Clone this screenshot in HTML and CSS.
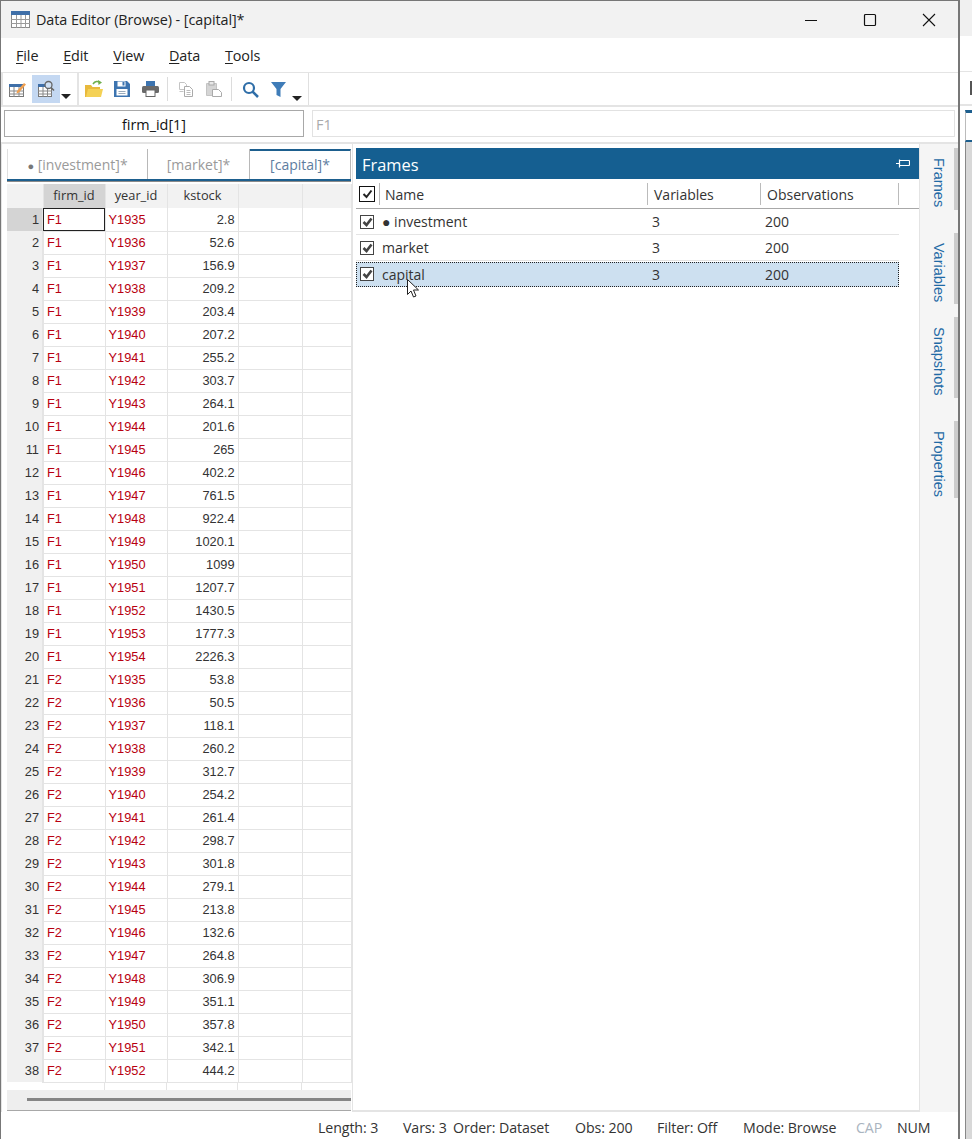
FILE: index.html
```html
<!DOCTYPE html>
<html lang="en">
<head>
    <meta charset="UTF-8">
    <title>Data Editor (Browse) - [capital]*</title>
    <link rel="stylesheet" href="styles.css">
</head>
<body>
<div class="screen">
    <div class="window">
        <header class="titlebar">
            <svg class="app-icon" width="20" height="18" viewBox="0 0 20 18">
                <rect x="0.5" y="0.5" width="18" height="16" fill="#fff" stroke="#8a8a8a"/>
                <rect x="0" y="0" width="19" height="4" fill="#3f6fa8"/>
                <path d="M0 8.500h19M0 12.500h19M5.500 4v13M10 4v13M14.500 4v13" stroke="#9a9a9a" fill="none"/>
            </svg>
            <span class="title">Data Editor (Browse) - [capital]*</span>
            <div class="win-buttons">
                <svg width="14" height="14" viewBox="0 0 14 14"><path d="M1 7.500h12" stroke="#111" fill="none"/></svg>
                <svg width="14" height="14" viewBox="0 0 14 14"><rect x="1.500" y="1.500" width="11" height="11" rx="1" fill="none" stroke="#111" stroke-width="1.200"/></svg>
                <svg width="14" height="14" viewBox="0 0 14 14"><path d="M1 1l12 12M13 1L1 13" stroke="#111" stroke-width="1.100" fill="none"/></svg>
            </div>
        </header>

        <nav class="menubar">
            <span><u>F</u>ile</span>
            <span><u>E</u>dit</span>
            <span><u>V</u>iew</span>
            <span><u>D</u>ata</span>
            <span><u>T</u>ools</span>
        </nav>

        <div class="toolbar-row">
            <div class="toolbar">
                <div class="tool-group first">
                    <span class="tool">
                        <svg width="18" height="18" viewBox="0 0 18 18">
                            <rect x="1.500" y="4.500" width="14" height="12" fill="#fff" stroke="#777"/>
                            <rect x="1" y="4" width="15" height="3" fill="#3f6fa8"/>
                            <path d="M1 11h15M1 14h15M6 7v10M11 7v10" stroke="#888" fill="none"/>
                            <path d="M9 11l7-8 2 1.500-7 8-2.500 1z" fill="#f0a050"/>
                        </svg>
                    </span>
                    <span class="tool active">
                        <svg width="18" height="18" viewBox="0 0 18 18">
                            <rect x="1.500" y="4.500" width="13" height="12" fill="#fff" stroke="#777"/>
                            <rect x="1" y="4" width="14" height="3" fill="#3f6fa8"/>
                            <path d="M1 11h14M1 14h14M6 7v10M10.500 7v10" stroke="#888" fill="none"/>
                            <circle cx="11.500" cy="5" r="3.500" fill="#cfe0f5" stroke="#666" stroke-width="1.300"/>
                            <path d="M14 7.500l3 3" stroke="#666" stroke-width="1.600"/>
                        </svg>
                    </span>
                    <span class="caret"></span>
                </div>
                <div class="tool-group second">
                    <span class="tool">
                        <svg width="18" height="18" viewBox="0 0 18 18">
                            <path d="M0 5h6l1.500 2H15v10H0z" fill="#e8b93c"/>
                            <path d="M1 17l2-8h15l-2 8z" fill="#f4d155"/>
                            <path d="M8 4c2-3 5-3 7-1.500" stroke="#6fae4c" stroke-width="1.500" fill="none"/>
                            <path d="M13 0l4 2.500-3.500 2.500z" fill="#6fae4c"/>
                        </svg>
                    </span>
                    <span class="tool">
                        <svg width="16" height="16" viewBox="0 0 16 16">
                            <path d="M0 0h13l3 3v13H0z" fill="#3d74b0"/>
                            <rect x="3.500" y="0.500" width="8" height="5" fill="#fff"/>
                            <rect x="8.500" y="1" width="2" height="3.500" fill="#3d74b0"/>
                            <rect x="2.500" y="8" width="11" height="6.500" fill="#fff"/>
                            <path d="M4.500 10.500h7M4.500 12.500h7" stroke="#9ab" fill="none"/>
                        </svg>
                    </span>
                    <span class="tool">
                        <svg width="17" height="16" viewBox="0 0 17 16">
                            <rect x="4" y="0" width="9" height="5" fill="#3d74b0"/>
                            <rect x="0" y="5" width="17" height="7" rx="1.500" fill="#6a6a6a"/>
                            <rect x="4" y="9" width="9" height="6.500" fill="#fff" stroke="#666"/>
                        </svg>
                    </span>
                    <i class="tool-sep"></i>
                    <span class="tool">
                        <svg width="16" height="16" viewBox="0 0 16 16">
                            <path d="M1.500 1.500h5l2 2v5h-7zM1.500 10.500h4" fill="#fff" stroke="#c4c4c4"/>
                            <path d="M6.500 5.500h5l3 3v7h-8z" fill="#fff" stroke="#aaa"/>
                            <path d="M8.500 9.500h4M8.500 11.500h4M8.500 13.500h4" stroke="#bbb" fill="none"/>
                        </svg>
                    </span>
                    <span class="tool">
                        <svg width="16" height="16" viewBox="0 0 16 16">
                            <path d="M0.500 2.500h10v12h-10z" fill="#d5d5d5" stroke="#c4c4c4"/>
                            <rect x="3" y="0.500" width="5" height="3.500" fill="#e8e8e8" stroke="#aaa"/>
                            <path d="M6.500 8.500h6l3 3v4h-9z" fill="#fff" stroke="#aaa"/>
                        </svg>
                    </span>
                    <i class="tool-sep"></i>
                    <span class="tool">
                        <svg width="17" height="17" viewBox="0 0 17 17">
                            <circle cx="7" cy="7" r="5" fill="none" stroke="#2f6ea8" stroke-width="2.200"/>
                            <path d="M10.500 10.500l5.500 5.500" stroke="#2f6ea8" stroke-width="2.500"/>
                        </svg>
                    </span>
                    <span class="tool">
                        <svg width="15" height="17" viewBox="0 0 15 17">
                            <path d="M0 1h15L9.500 8v8l-4-2V8z" fill="#3f7cb8"/>
                        </svg>
                    </span>
                    <span class="caret low"></span>
                </div>
            </div>
        </div>

        <div class="input-row">
            <div class="name-box">firm_id[1]</div>
            <div class="value-box">F1</div>
        </div>

        <div class="main">
            <section class="data-pane">
                <div class="tabs">
                    <span class="tab"><b class="dot">●</b> [investment]*</span>
                    <span class="tab tab-market">[market]*</span>
                    <span class="tab tab-current">[capital]*</span>
                </div>
                <div class="grid-wrap">
                    <table class="grid">
                        <colgroup>
                            <col class="c-row"><col class="c-firm"><col class="c-year"><col class="c-stock"><col class="c-blank"><col class="c-blank2">
                        </colgroup>
                        <thead>
                            <tr><th class="corner"></th><th class="selected-col">firm_id</th><th>year_id</th><th>kstock</th><th></th><th></th></tr>
                        </thead>
                        <tbody>
                            <tr><th class="selected-row">1</th><td class="str cursor-cell">F1</td><td class="str">Y1935</td><td>2.8</td><td></td><td></td></tr>
                            <tr><th>2</th><td class="str">F1</td><td class="str">Y1936</td><td>52.6</td><td></td><td></td></tr>
                            <tr><th>3</th><td class="str">F1</td><td class="str">Y1937</td><td>156.9</td><td></td><td></td></tr>
                            <tr><th>4</th><td class="str">F1</td><td class="str">Y1938</td><td>209.2</td><td></td><td></td></tr>
                            <tr><th>5</th><td class="str">F1</td><td class="str">Y1939</td><td>203.4</td><td></td><td></td></tr>
                            <tr><th>6</th><td class="str">F1</td><td class="str">Y1940</td><td>207.2</td><td></td><td></td></tr>
                            <tr><th>7</th><td class="str">F1</td><td class="str">Y1941</td><td>255.2</td><td></td><td></td></tr>
                            <tr><th>8</th><td class="str">F1</td><td class="str">Y1942</td><td>303.7</td><td></td><td></td></tr>
                            <tr><th>9</th><td class="str">F1</td><td class="str">Y1943</td><td>264.1</td><td></td><td></td></tr>
                            <tr><th>10</th><td class="str">F1</td><td class="str">Y1944</td><td>201.6</td><td></td><td></td></tr>
                            <tr><th>11</th><td class="str">F1</td><td class="str">Y1945</td><td>265</td><td></td><td></td></tr>
                            <tr><th>12</th><td class="str">F1</td><td class="str">Y1946</td><td>402.2</td><td></td><td></td></tr>
                            <tr><th>13</th><td class="str">F1</td><td class="str">Y1947</td><td>761.5</td><td></td><td></td></tr>
                            <tr><th>14</th><td class="str">F1</td><td class="str">Y1948</td><td>922.4</td><td></td><td></td></tr>
                            <tr><th>15</th><td class="str">F1</td><td class="str">Y1949</td><td>1020.1</td><td></td><td></td></tr>
                            <tr><th>16</th><td class="str">F1</td><td class="str">Y1950</td><td>1099</td><td></td><td></td></tr>
                            <tr><th>17</th><td class="str">F1</td><td class="str">Y1951</td><td>1207.7</td><td></td><td></td></tr>
                            <tr><th>18</th><td class="str">F1</td><td class="str">Y1952</td><td>1430.5</td><td></td><td></td></tr>
                            <tr><th>19</th><td class="str">F1</td><td class="str">Y1953</td><td>1777.3</td><td></td><td></td></tr>
                            <tr><th>20</th><td class="str">F1</td><td class="str">Y1954</td><td>2226.3</td><td></td><td></td></tr>
                            <tr><th>21</th><td class="str">F2</td><td class="str">Y1935</td><td>53.8</td><td></td><td></td></tr>
                            <tr><th>22</th><td class="str">F2</td><td class="str">Y1936</td><td>50.5</td><td></td><td></td></tr>
                            <tr><th>23</th><td class="str">F2</td><td class="str">Y1937</td><td>118.1</td><td></td><td></td></tr>
                            <tr><th>24</th><td class="str">F2</td><td class="str">Y1938</td><td>260.2</td><td></td><td></td></tr>
                            <tr><th>25</th><td class="str">F2</td><td class="str">Y1939</td><td>312.7</td><td></td><td></td></tr>
                            <tr><th>26</th><td class="str">F2</td><td class="str">Y1940</td><td>254.2</td><td></td><td></td></tr>
                            <tr><th>27</th><td class="str">F2</td><td class="str">Y1941</td><td>261.4</td><td></td><td></td></tr>
                            <tr><th>28</th><td class="str">F2</td><td class="str">Y1942</td><td>298.7</td><td></td><td></td></tr>
                            <tr><th>29</th><td class="str">F2</td><td class="str">Y1943</td><td>301.8</td><td></td><td></td></tr>
                            <tr><th>30</th><td class="str">F2</td><td class="str">Y1944</td><td>279.1</td><td></td><td></td></tr>
                            <tr><th>31</th><td class="str">F2</td><td class="str">Y1945</td><td>213.8</td><td></td><td></td></tr>
                            <tr><th>32</th><td class="str">F2</td><td class="str">Y1946</td><td>132.6</td><td></td><td></td></tr>
                            <tr><th>33</th><td class="str">F2</td><td class="str">Y1947</td><td>264.8</td><td></td><td></td></tr>
                            <tr><th>34</th><td class="str">F2</td><td class="str">Y1948</td><td>306.9</td><td></td><td></td></tr>
                            <tr><th>35</th><td class="str">F2</td><td class="str">Y1949</td><td>351.1</td><td></td><td></td></tr>
                            <tr><th>36</th><td class="str">F2</td><td class="str">Y1950</td><td>357.8</td><td></td><td></td></tr>
                            <tr><th>37</th><td class="str">F2</td><td class="str">Y1951</td><td>342.1</td><td></td><td></td></tr>
                            <tr><th>38</th><td class="str">F2</td><td class="str">Y1952</td><td>444.2</td><td></td><td></td></tr>
                        </tbody>
                    </table>
                    <div class="grid-tail"><i></i><i></i><i></i><i></i><i></i></div>
                    <div class="hscroll"><span class="hscroll-thumb"></span></div>
                </div>
            </section>

            <section class="frames-pane">
                <div class="frames-title">
                    <span class="frames-label">Frames</span>
                    <svg width="14" height="9" viewBox="0 0 14 9">
                        <path d="M0 4.500h3.500M3.500 0.500v8M3.500 1.500h10M3.500 6.500h10M13.500 1.500v5" stroke="#fff" fill="none" stroke-width="1.200"/>
                    </svg>
                </div>
                <div class="frames-head">
                    <span class="cell-check head-check"><span class="checkbox strong"><svg width="11" height="10" viewBox="0 0 11 10"><path d="M1.500 5l3 3 5-6.500" stroke="#222" stroke-width="2" fill="none"/></svg></span></span>
                    <span class="cell-name">Name</span>
                    <span class="cell-vars">Variables</span>
                    <span class="cell-obs">Observations</span>
                </div>
                <div class="frames-row">
                    <span class="checkbox"><svg width="11" height="10" viewBox="0 0 11 10"><path d="M1.500 5l3 3 5-6.500" stroke="#444" stroke-width="2.600" fill="none"/></svg></span>
                    <span class="row-name">● investment</span><span class="row-vars">3</span><span class="row-obs">200</span>
                </div>
                <div class="frames-row">
                    <span class="checkbox"><svg width="11" height="10" viewBox="0 0 11 10"><path d="M1.500 5l3 3 5-6.500" stroke="#444" stroke-width="2.600" fill="none"/></svg></span>
                    <span class="row-name">market</span><span class="row-vars">3</span><span class="row-obs">200</span>
                </div>
                <div class="frames-row current">
                    <span class="checkbox"><svg width="11" height="10" viewBox="0 0 11 10"><path d="M1.500 5l3 3 5-6.500" stroke="#444" stroke-width="2.600" fill="none"/></svg></span>
                    <span class="row-name">capital</span><span class="row-vars">3</span><span class="row-obs">200</span>
                </div>
                <svg class="mouse" width="13" height="20" viewBox="0 0 13 20">
                    <path d="M0.500 0.500v15l3.500-3.500 2.500 6 2.500-1-2.500-6h5z" fill="#fff" stroke="#222"/>
                </svg>
            </section>

            <aside class="side-tabs">
                <div class="side-tab t-frames"><span>Frames</span></div>
                <div class="side-tab t-variables"><span>Variables</span></div>
                <div class="side-tab t-snapshots"><span>Snapshots</span></div>
                <div class="side-tab t-properties"><span>Properties</span></div>
            </aside>
        </div>

        <footer class="statusbar">
            <span class="s-length">Length: 3</span>
            <span class="s-vars">Vars: 3</span>
            <span class="s-order">Order: Dataset</span>
            <span class="s-obs">Obs: 200</span>
            <span class="s-filter">Filter: Off</span>
            <span class="s-mode">Mode: Browse</span>
            <span class="s-cap">CAP</span>
            <span class="s-num">NUM</span>
        </footer>
    </div>

    <div class="back-window">
        <div class="back-title"></div>
        <div class="back-menu"></div>
        <div class="back-tools"><i></i></div>
        <div class="back-input"></div>
        <div class="back-tabs"></div>
        <div class="back-body"></div>
    </div>
</div>
</body>
</html>
```

FILE: styles.css
```css
/* ===== BASE ===== */
* {
    margin: 0;
    padding: 0;
    box-sizing: border-box;
}

html, body {
    width: 972px;
    height: 1139px;
    overflow: hidden;
}

body {
    font-family: "Open Sans", "Noto Sans", sans-serif;
    font-size: 14px;
    color: #222;
    background: #fff;
}

.screen {
    display: flex;
    height: 1139px;
}

/* ===== WINDOW ===== */
.window {
    width: 961px;
    height: 1139px;
    display: flex;
    flex-direction: column;
    border-top: 1px solid #777;
    border-left: 1px solid #777;
    border-right: 2px solid #777;
    background: #fff;
}

.titlebar {
    height: 37px;
    flex: none;
    display: flex;
    align-items: center;
    padding-left: 10px;
    background: #f2f2f2;
}

.app-icon {
    margin-right: 5px;
}

.title {
    font-size: 14.400px;
    color: #222;
    letter-spacing: -0.08px;
}

.win-buttons {
    margin-left: auto;
    display: flex;
    gap: 45px;
    padding-right: 22px;
}

.menubar {
    height: 34px;
    flex: none;
    display: flex;
    align-items: center;
    gap: 24.800px;
    padding-left: 15px;
    font-size: 14.400px;
    letter-spacing: -0.1px;
}

.menubar u {
    text-underline-offset: 2px;
}

/* ===== TOOLBAR ===== */
.toolbar-row {
    height: 35px;
    flex: none;
    border-top: 1px solid #e4e4e4;
    border-bottom: 2px solid #e4e4e4;
}

.toolbar {
    display: flex;
    height: 32px;
    width: 308px;
    border-right: 1px solid #e0e0e0;
}

.tool-group {
    display: flex;
    align-items: center;
    border-left: 2px solid #e4e4e4;
    height: 100%;
}

.first {
    width: 76px;
}

.second {
    flex: 1;
    padding-left: 1px;
}

.tool {
    width: 28px;
    height: 28px;
    display: flex;
    align-items: center;
    justify-content: center;
}

.active {
    margin-left: 1px;
    background: #c4d8f2;
}

.tool-sep {
    width: 1px;
    height: 24px;
    background: #dcdcdc;
    margin: 0 4px 0 3px;
}

.caret {
    width: 0;
    height: 0;
    margin: 14px 0 0 1px;
    border-left: 5px solid transparent;
    border-right: 5px solid transparent;
    border-top: 5px solid #222;
}

.low {
    margin-top: 18px;
    margin-left: 0;
}

/* ===== INPUT ROW ===== */
.input-row {
    height: 37px;
    flex: none;
    display: flex;
    gap: 8px;
    padding: 3px 3px 5px;
    border-bottom: 2px solid #e4e4e4;
}

.name-box {
    width: 300px;
    border: 1px solid #a8a8a8;
    text-align: center;
    line-height: 27px;
    font-size: 14.400px;
    color: #111;
}

.value-box {
    flex: 1;
    border: 1px solid #e2e2e2;
    padding-left: 3px;
    line-height: 27px;
    color: #aaa;
    font-size: 14.400px;
}

/* ===== MAIN AREA ===== */
.main {
    flex: 1;
    display: flex;
    min-height: 0;
}

.data-pane {
    width: 351px;
    flex: none;
    padding: 5px 0 0 5px;
    border-left: 1px solid #e4e4e4;
}

.tabs {
    display: flex;
    height: 32px;
    width: 344px;
    border-bottom: 2px solid #1d5f8e;
    box-shadow: 0 1px 0 #8a8a8a;
}

.tab {
    height: 30px;
    line-height: 31px;
    text-align: center;
    font-size: 14px;
    color: #9a9a9a;
    width: 141px;
    border-right: 1px solid #b8b8b8;
    border-left: 1px solid #e0e0e0;
}

.tab-market {
    width: 102px;
    border-left: 0;
}

.tab-current {
    width: 101px;
    border-top: 2px solid #1d5f8e;
    border-left: 0;
    line-height: 27px;
    color: #5e7da0;
}

.dot {
    font-weight: normal;
    font-size: 11px;
    color: #777;
}

.grid-wrap {
    width: 344px;
    margin-top: 3px;
}

.grid {
    border-collapse: collapse;
    table-layout: fixed;
    width: 344px;
    font-family: "Liberation Sans", Arial, sans-serif;
    font-size: 12.800px;
}

.c-row { width: 36px; }
.c-firm { width: 62px; }
.c-year { width: 62px; }
.c-stock { width: 71px; }
.c-blank { width: 64px; }
.c-blank2 { width: 49px; }

.grid thead th {
    height: 24px;
    padding-bottom: 2px;
    background: #f2f2f2;
    border-right: 1px solid #e4e4e4;
    font-family: "Open Sans", sans-serif;
    font-size: 12.800px;
    font-weight: normal;
    color: #333;
    text-align: center;
}

.grid thead .selected-col {
    background: #d4d4d4;
}

.grid tbody tr {
    height: 23px;
}

.grid tbody th {
    background: #f0f0f0;
    font-weight: normal;
    text-align: right;
    padding-right: 3px;
    border-right: 2px solid #e4e4e4;
    color: #333;
}

.grid tbody .selected-row {
    background: #d4d4d4;
}

.grid td {
    border-right: 1px solid #e4e4e4;
    border-bottom: 1px solid #e4e4e4;
    text-align: right;
    padding: 0 3px;
    color: #333;
}

.grid td.str {
    text-align: left;
    color: #b80010;
}

.grid td.cursor-cell {
    outline: 1px solid #222;
    outline-offset: -1px;
}

.grid-tail {
    display: flex;
    height: 7px;
    padding-left: 36px;
}

.grid-tail i {
    border-right: 1px solid #e4e4e4;
    border-left: 0;
    width: 62px;
}

.grid-tail i:nth-child(3) { width: 71px; }
.grid-tail i:nth-child(4) { width: 64px; }
.grid-tail i:nth-child(5) { width: 49px; border-right: 0; }

.hscroll {
    height: 21px;
    background: #eeeeee;
    padding: 8px 0 0 20px;
    border-bottom: 1px solid #a8a8a8;
}

.hscroll-thumb {
    display: block;
    height: 3px;
    background: #858585;
}

/* ===== FRAMES PANE ===== */
.frames-pane {
    position: relative;
    width: 568px;
    flex: none;
    padding: 4px 0 0 3px;
    border-left: 1px solid #e4e4e4;
    border-right: 1px solid #e4e4e4;
    border-bottom: 2px solid #e4e4e4;
}

.frames-title {
    height: 31px;
    width: 563px;
    padding: 0 9px 0 6px;
    display: flex;
    align-items: center;
    justify-content: space-between;
    background: #155f91;
    color: #fff;
    font-size: 16.400px;
}

.frames-label {
    padding-top: 2px;
}

.frames-head {
    display: flex;
    align-items: center;
    height: 30px;
    width: 563px;
    border-bottom: 1px solid #a8a8a8;
    font-size: 14px;
    color: #333;
}

.head-check {
    width: 24px;
    padding-left: 3px;
    height: 22px;
    display: flex;
    align-items: center;
    border-right: 1px solid #bbb;
}

.cell-name {
    width: 268px;
    padding-left: 5px;
    height: 22px;
    border-right: 1px solid #bbb;
    line-height: 24px;
}

.cell-vars {
    width: 113px;
    padding-left: 6px;
    height: 22px;
    border-right: 1px solid #bbb;
    line-height: 24px;
}

.cell-obs {
    width: 138px;
    padding-left: 6px;
    height: 22px;
    border-right: 1px solid #bbb;
    line-height: 24px;
}

.checkbox {
    width: 14px;
    height: 14px;
    flex: none;
    display: flex;
    align-items: center;
    justify-content: center;
    border: 1px solid #444;
    background: #fff;
}

.strong {
    width: 16px;
    height: 16px;
    border: 1px solid #111;
}

.frames-row {
    display: flex;
    align-items: center;
    height: 26px;
    width: 543px;
    padding-left: 4px;
    border-bottom: 1px solid #e4e4e4;
    font-size: 14px;
    color: #333;
}

.row-name {
    width: 278px;
    padding-left: 8px;
}

.row-vars {
    width: 113px;
}

.current {
    margin-top: 1px;
    height: 25px;
    padding: 0 0 1px 3px;
    background: #cde0f0;
    border: 1px dotted #222;
}

.mouse {
    position: absolute;
    left: 54px;
    top: 135px;
}

/* ===== SIDE TABS ===== */
.side-tabs {
    flex: 1;
    position: relative;
    background: #f5f5f5;
    display: flex;
    flex-direction: column;
    align-items: flex-end;
}

.side-tab {
    width: 100%;
    display: flex;
    justify-content: flex-start;
    padding: 10px 0 0 11px;
    border-right: 4px solid #cccccc;
    color: #1f6aa5;
    font-family: "Liberation Sans", Arial, sans-serif;
}

.side-tab span {
    writing-mode: vertical-rl;
    font-size: 14.500px;
}

.t-frames { height: 62px; margin-top: 4px; margin-bottom: 23px; }
.t-variables { height: 71px; margin-bottom: 13px; }
.t-snapshots { height: 81px; margin-bottom: 23px; }
.t-properties { height: 77px; }

/* ===== STATUS BAR ===== */
.statusbar {
    height: 27px;
    flex: none;
    display: flex;
    align-items: center;
    font-size: 14.200px;
    color: #333;
    padding: 4px 0 0 317px;
    letter-spacing: -0.1px;
}

.s-length { width: 85px; }
.s-vars { width: 50px; }
.s-order { width: 122px; }
.s-obs { width: 82px; }
.s-filter { width: 86px; }
.s-mode { width: 113px; }
.s-cap { width: 41px; color: #a9b4c0; }

/* ===== WINDOW BEHIND ===== */
.back-window {
    flex: 1;
    display: flex;
    flex-direction: column;
    background: #fff;
}

.back-title {
    height: 36px;
    background: #f0f0f0;
}

.back-menu {
    height: 36px;
    border-bottom: 1px solid #e4e4e4;
}

.back-tools {
    height: 34px;
    padding: 9px 0 0 10px;
    border-bottom: 2px solid #e4e4e4;
}

.back-tools i {
    display: block;
    width: 2px;
    height: 14px;
    background: #555;
}

.back-input {
    height: 4px;
}

.back-tabs {
    height: 32px;
    margin-left: 5px;
    border-top: 3px solid #1d5f8e;
    border-left: 1px solid #bbb;
    border-bottom: 2px solid #1d5f8e;
}

.back-body {
    flex: 1;
    margin-left: 5px;
    background: #d8d8d8;
    border-left: 1px solid #888;
}
```
